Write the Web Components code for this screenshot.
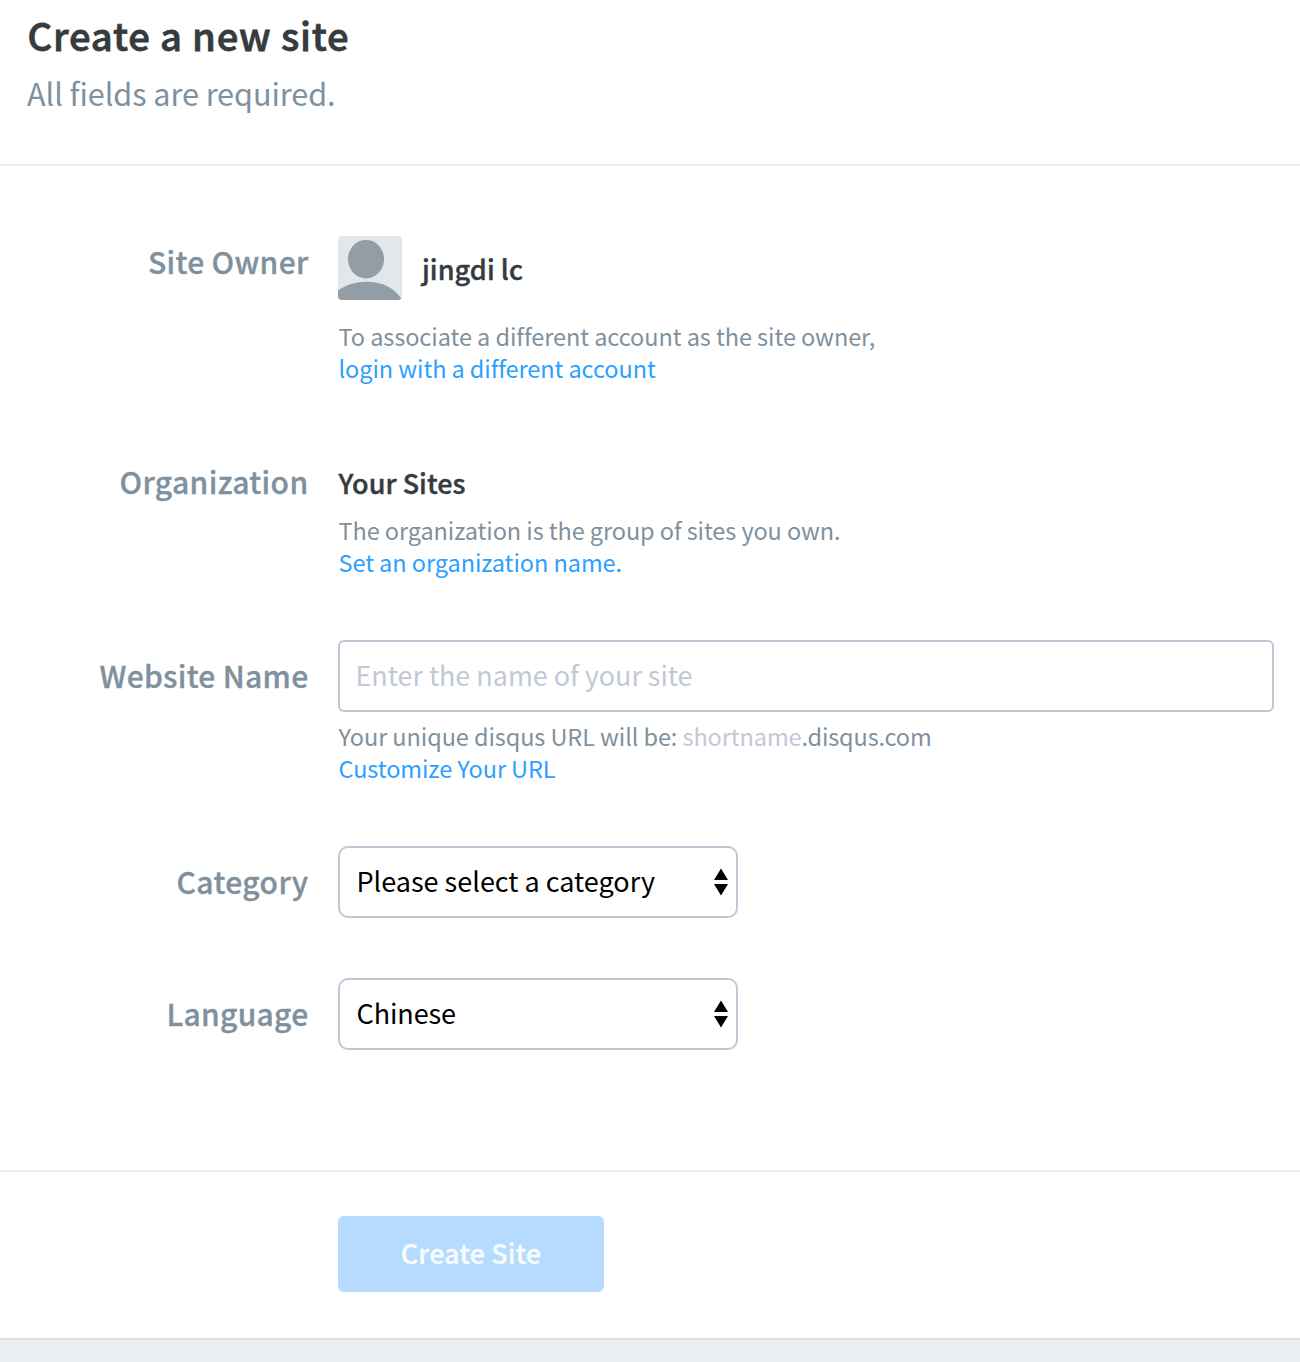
<!DOCTYPE html>
<html lang="en">
<head>
<meta charset="utf-8">
<title>Create a new site</title>
<style>
body{margin:0;background:#fff;font-family:"Noto Sans CJK SC","Noto Sans",sans-serif;color:#353b3e}
</style>
</head>
<body>
<site-page></site-page>
<script>
const define=(name,html)=>customElements.define(name,class extends HTMLElement{
  constructor(){super();this.attachShadow({mode:'open'}).innerHTML=html;}
});

/* A run of text fitted to a set advance width through letter spacing. */
customElements.define('text-run',class extends HTMLElement{
  constructor(){
    super();
    this.attachShadow({mode:'open'}).innerHTML='<style>:host{display:inline-block;white-space:pre;vertical-align:top}</style><slot></slot>';
  }
  connectedCallback(){
    const want=parseFloat(this.getAttribute('w'));
    const n=this.textContent.length;
    if(!want||!n)return;
    const have=this.getBoundingClientRect().width;
    this.style.letterSpacing=((want-have)/n)+'px';
  }
});

define('page-header',`<style>
:host{display:block;box-sizing:border-box;height:166px;border-bottom:2px solid #ebeef2;padding:5px 0 0 27px}
h1{margin:0;padding-left:.5px;font-size:38.2px;line-height:60px;font-weight:500;-webkit-text-stroke:.8px currentColor;color:#353b3e}
p{margin:5px 0 0;font-size:30.6px;line-height:46px;color:#7f919e}
</style><h1><slot name="title"></slot></h1><p><slot></slot></p>`);

define('form-row',`<style>
:host{display:flex;align-items:flex-start;gap:29.5px}
.label{width:308.5px;text-align:right;font-size:30px;line-height:44px;font-weight:500;-webkit-text-stroke:.35px currentColor;color:#7f919e;padding-top:var(--label-top,0)}
.body{flex:1;margin-right:26px}
</style><div class="label"><slot name="label"></slot></div><div class="body"><slot></slot></div>`);

define('help-text',`<style>
:host{display:block;font-size:23.5px;line-height:32px;color:#7f919e;padding-left:.5px}
div{display:flex}
</style><div><slot></slot></div><div><slot name="more"></slot></div>`);

define('text-link',`<style>:host{display:block}a{color:#2e9fff;text-decoration:none}</style><a><slot></slot></a>`);

define('user-badge',`<style>
:host{display:flex;gap:20px;height:64px;font-size:27px;font-weight:500;-webkit-text-stroke:.4px currentColor;line-height:68px;color:#353b3e}
svg{display:block}span{margin-top:-1px}
</style><svg width="64" height="64" viewBox="0 0 64 64"><defs><clipPath id="c"><rect width="64" height="64" rx="4"/></clipPath></defs><g clip-path="url(#c)" stroke="none"><rect width="64" height="64" fill="#e1e7ea"/><ellipse cx="28" cy="23.2" rx="18" ry="19.3" fill="#929da6"/><path d="M0 54.5C8 48.5 18 45.7 28 45.7C44 45.7 57 52 63.5 63L64 64H0z" fill="#929da6"/></g></svg><span><slot></slot></span>`);

define('text-field',`<style>
:host{display:flex;box-sizing:border-box;height:72px;border:2px solid #c2c6d6;border-radius:6px;padding-left:15.5px;font-size:27px;line-height:66px;color:#c2c8d6}
</style><slot></slot>`);

define('select-field',`<style>
:host{display:flex;box-sizing:border-box;width:400px;height:72px;border:2px solid #c2c6d6;border-radius:10px;padding:0 8px 0 16.5px;justify-content:space-between;font-size:27px;line-height:66px;color:#000}
svg{display:block;margin-top:20px}
</style><span><slot></slot></span><svg width="14" height="28" viewBox="0 0 14 28"><path d="M7 .5l7 11.5H0zM7 27.5l7-11.5H0z"/></svg>`);

define('primary-button',`<style>
:host{display:block}
button{display:block;width:266px;height:76px;border:0;border-radius:6px;padding:0 0 2px;background:#b5dbff;color:#f8fcff;font:500 27px/74px "Noto Sans CJK SC","Noto Sans",sans-serif;-webkit-text-stroke:.3px currentColor}
</style><button><slot></slot></button>`);

define('site-page',`<style>
:host{display:flex;flex-direction:column;height:1362px;overflow:hidden}
main{display:flex;flex-direction:column;height:934px;padding-top:70px;border-bottom:2px solid #ebeef2}
.owner{height:214px;--label-top:3px}
.org{height:190px;--label-top:9px}
.name{height:206px;--label-top:13px}
.cat{height:132px;--label-top:13px}
.lang{--label-top:13px}
.owner help-text{margin-top:20px}
.org help-text{margin-top:9px}
.name help-text{margin-top:8px}
.orgname{font-size:27px;line-height:44px;font-weight:500;-webkit-text-stroke:.4px currentColor;color:#353b3e;padding:11px 0 0 .5px}
.actions{padding:44px 0 46px 338px}
footer{flex:1;border-top:2px solid #dbdfe6;background:#eaedf2}
.dim{color:#c2c8d6}
</style>
<page-header><text-run slot="title" w="322">Create a new site</text-run><text-run w="308.5">All fields are required.</text-run></page-header>
<main>
<form-row class="owner"><text-run slot="label" w="160.5">Site Owner</text-run><user-badge><text-run w="101">jingdi lc</text-run></user-badge><help-text><text-run w="536.5">To associate a different account as the site owner,</text-run><text-link slot="more"><text-run w="317">login with a different account</text-run></text-link></help-text></form-row>
<form-row class="org"><text-run slot="label" w="189">Organization</text-run><div class="orgname"><text-run w="127">Your Sites</text-run></div><help-text><text-run w="502">The organization is the group of sites you own.</text-run><text-link slot="more"><text-run w="283.5">Set an organization name.</text-run></text-link></help-text></form-row>
<form-row class="name"><text-run slot="label" w="209">Website Name</text-run><text-field><text-run w="337">Enter the name of your site</text-run></text-field><help-text><text-run w="344">Your unique disqus URL will be: </text-run><text-run class="dim" w="119">shortname</text-run><text-run w="130">.disqus.com</text-run><text-link slot="more"><text-run w="217">Customize Your URL</text-run></text-link></help-text></form-row>
<form-row class="cat"><text-run slot="label" w="132">Category</text-run><select-field><text-run w="298.5">Please select a category</text-run></select-field></form-row>
<form-row class="lang"><text-run slot="label" w="142">Language</text-run><select-field><text-run w="99.5">Chinese</text-run></select-field></form-row>
</main>
<div class="actions"><primary-button><text-run w="140.5">Create Site</text-run></primary-button></div>
<footer></footer>`);
</script>
</body>
</html>
